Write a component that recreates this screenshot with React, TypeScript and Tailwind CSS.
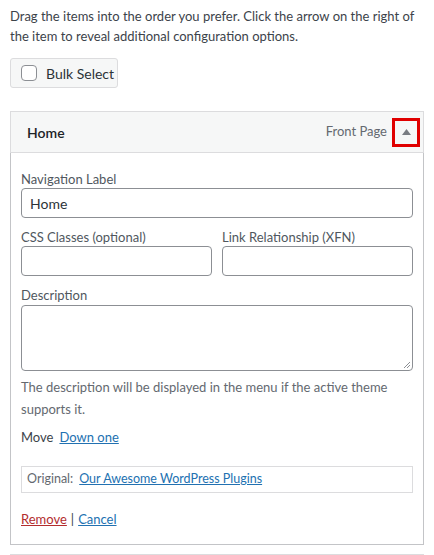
export default function App() {
  return (
    <div className="min-h-[555px] bg-white px-[10px] pt-[7px] text-[13px] text-[#3c434a] [font-family:Lato,sans-serif]">
      <p className="leading-[19.5px]">
        Drag the items into the order you prefer. Click the arrow on the right of the item to reveal additional
        configuration options.
      </p>

      {/* Bulk select */}
      <button className="mt-[12px] flex h-[30px] w-[108px] items-center gap-[9px] whitespace-nowrap rounded-[3px] border border-[#dcdcde] bg-[#f6f7f7] pl-[10px] text-[14px] text-[#2c3338]">
        <span className="h-[16px] w-[16px] shrink-0 rounded-[4px] border border-[#8c8f94] bg-white" />
        Bulk Select
      </button>

      {/* Menu item */}
      <div className="mt-[23px] w-[414px]">
        <div className="flex h-[42px] items-center border border-[#dcdcde] bg-[#f6f7f7] pl-[16px] pr-[3px]">
          <span className="text-[14px] font-semibold text-[#1d2327]">Home</span>
          <span className="ml-auto mr-[5px] text-[13px] text-[#646970]">Front Page</span>
          <span className="flex h-[29px] w-[28px] items-center justify-center border-[3px] border-[#e00000]">
            <svg width="9" height="6" viewBox="0 0 9 6">
              <path d="M4.5 0 L9 6 L0 6 Z" fill="#787c82" />
            </svg>
          </span>
        </div>

        <div className="border border-t-0 border-[#c3c4c7] px-[10px] pb-[14px] pt-[17px]">
          <label className="block leading-[18px] text-[#50575e]">Navigation Label</label>
          <div className="flex h-[30px] items-center rounded-[4px] border border-[#8c8f94] px-[8px] text-[14px] text-[#2c3338]">
            Home
          </div>

          <div className="mt-[10px] grid grid-cols-2 gap-[10px]">
            <div>
              <label className="block leading-[18px] text-[#50575e]">CSS Classes (optional)</label>
              <div className="h-[30px] rounded-[4px] border border-[#8c8f94]" />
            </div>
            <div>
              <label className="block leading-[18px] text-[#50575e]">Link Relationship (XFN)</label>
              <div className="h-[30px] rounded-[4px] border border-[#8c8f94]" />
            </div>
          </div>

          <label className="mt-[10px] block leading-[18px] text-[#50575e]">Description</label>
          <div className="relative mt-[1px] h-[66px] rounded-[4px] border border-[#8c8f94]">
            <svg className="absolute bottom-[1px] right-[1px]" width="8" height="8" viewBox="0 0 8 8">
              <path d="M7 1 L1 7 M7 4 L4 7" stroke="#8c8f94" strokeWidth="1" />
            </svg>
          </div>

          <p className="mt-[5px] leading-[22px] text-[#646970]">
            The description will be displayed in the menu if the active theme supports it.
          </p>

          <div className="mt-[6px] flex gap-[6px] leading-[22px]">
            <span>Move</span>
            <a className="text-[#2271b1] underline">Down one</a>
          </div>

          <div className="mt-[18px] flex h-[27px] items-center gap-[6px] border border-[#dcdcde] px-[5px] text-[12.5px]">
            <span className="text-[#646970]">Original:</span>
            <a className="text-[#2271b1] underline">Our Awesome WordPress Plugins</a>
          </div>

          <div className="mt-[15px] leading-[22px]">
            <a className="text-[#b32d2e] underline">Remove</a>
            <span className="mx-[4px]">|</span>
            <a className="text-[#2271b1] underline">Cancel</a>
          </div>
        </div>
      </div>

      <div className="mt-[9px] h-[2px] w-[414px] border-t border-[#dcdcde]" />
    </div>
  );
}
